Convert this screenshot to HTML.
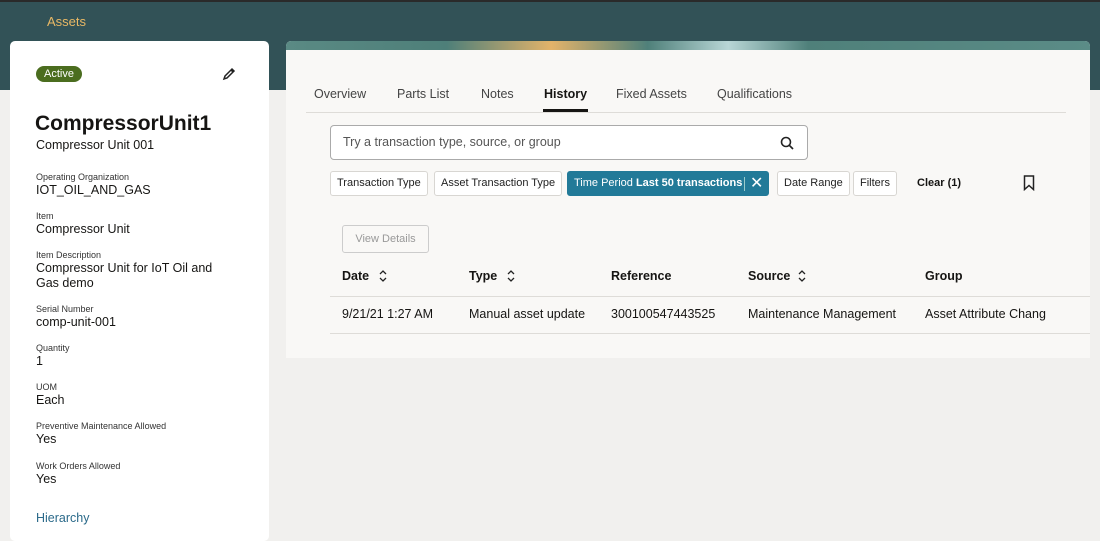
<!DOCTYPE html>
<html><head><style>
*{margin:0;padding:0;box-sizing:border-box}
body{width:1100px;height:538px;overflow:hidden;background:#f1f0ee;font-family:"Liberation Sans",sans-serif;color:#161513;position:relative}
.hdr{position:absolute;left:0;top:0;width:1100px;height:90px;background:#325257;border-top:2px solid #2a2a2a}
.hdr span{position:absolute;left:47px;top:12px;color:#e8b865;font-size:13px}
.left{position:absolute;left:10px;top:41px;width:259px;height:500px;background:#fff;border-radius:5px}
.badge{position:absolute;left:26px;top:25px;background:#4b6d1f;color:#fff;font-size:11px;padding:2px 8px;border-radius:10px}
.lbl{position:absolute;left:26px;font-size:9px;color:#333}
.val{position:absolute;left:26px;font-size:12.5px;line-height:15px}
.right{position:absolute;left:286px;top:41px;width:804px;height:317px;background:#f9f8f6;border-radius:5px 5px 0 0;overflow:hidden}
.band{position:absolute;left:0;top:0;width:804px;height:9px;background:linear-gradient(90deg,#5a8a84,#4e7f79 20%,#e3b36a 33%,#4f807a 45%,#b8d6d6 55%,#4f807a 65%,#5b8c87)}
.tab{position:absolute;top:46px;font-size:12.5px;color:#444}
.chip{position:absolute;top:130px;height:25px;border:1px solid #d8d6d2;background:#fff;border-radius:3px;font-size:11px;line-height:23px;padding:0 6px;color:#222}
.th{position:absolute;top:228px;font-size:12.5px;font-weight:bold}
.td{position:absolute;top:266px;font-size:12.5px}
.sort{position:absolute;top:228px}
</style></head><body>
<div class="hdr"><span>Assets</span></div>
<div class="left">
<div class="badge">Active</div>
<svg style="position:absolute;left:212px;top:26px" width="14" height="14" viewBox="0 0 14 14"><path d="M2 12l1-3 7-7 2 2-7 7z M9 3l2 2" fill="none" stroke="#222" stroke-width="1.5"/></svg>
<div style="position:absolute;left:25px;top:71px;font-size:21px;font-weight:bold">CompressorUnit1</div>
<div class="val" style="top:97px">Compressor Unit 001</div>
<div class="lbl" style="top:131px">Operating Organization</div><div class="val" style="top:142px">IOT_OIL_AND_GAS</div>
<div class="lbl" style="top:170px">Item</div><div class="val" style="top:181px">Compressor Unit</div>
<div class="lbl" style="top:209px">Item Description</div><div class="val" style="top:220px">Compressor Unit for IoT Oil and<br>Gas demo</div>
<div class="lbl" style="top:263px">Serial Number</div><div class="val" style="top:274px">comp-unit-001</div>
<div class="lbl" style="top:302px">Quantity</div><div class="val" style="top:313px">1</div>
<div class="lbl" style="top:341px">UOM</div><div class="val" style="top:352px">Each</div>
<div class="lbl" style="top:380px">Preventive Maintenance Allowed</div><div class="val" style="top:391px">Yes</div>
<div class="lbl" style="top:420px">Work Orders Allowed</div><div class="val" style="top:431px">Yes</div>
<div class="val" style="top:470px;color:#2b6a8a">Hierarchy</div>
</div>
<div class="right">
<div class="band"></div>
<div class="tab" style="left:28px">Overview</div>
<div class="tab" style="left:111px">Parts List</div>
<div class="tab" style="left:195px">Notes</div>
<div class="tab" style="left:258px;color:#161513;font-weight:bold">History</div>
<div style="position:absolute;left:257px;top:68px;width:45px;height:3px;background:#161513"></div>
<div class="tab" style="left:330px">Fixed Assets</div>
<div class="tab" style="left:431px">Qualifications</div>
<div style="position:absolute;left:20px;top:71px;width:760px;height:1px;background:#dedcd8"></div>
<div style="position:absolute;left:44px;top:84px;width:478px;height:35px;border:1px solid #aaa;border-radius:4px;background:#fff;font-size:12.5px;color:#555;padding:9px 12px">Try a transaction type, source, or group</div>
<svg style="position:absolute;left:494px;top:95px" width="14" height="14" viewBox="0 0 14 14"><circle cx="6" cy="6" r="4.5" fill="none" stroke="#222" stroke-width="1.6"/><path d="M9.3 9.3L13 13" stroke="#222" stroke-width="1.7"/></svg>
<div class="chip" style="left:44px">Transaction Type</div>
<div class="chip" style="left:148px">Asset Transaction Type</div>
<div class="chip" style="left:281px;background:#227a98;border-color:#227a98;color:#fff;width:202px">Time Period <b>Last 50 transactions</b><span style="position:absolute;left:176px;top:5px;width:1px;height:14px;background:#9cc"></span><span style="position:absolute;left:182px;font-size:16px">✕</span></div>
<div class="chip" style="left:491px">Date Range</div>
<div class="chip" style="left:567px">Filters</div>
<div style="position:absolute;left:631px;top:136px;font-size:11px;font-weight:bold">Clear (1)</div>
<svg style="position:absolute;left:737px;top:134px" width="12" height="16" viewBox="0 0 12 16"><path d="M1.5 1h9v13.5L6 10.5 1.5 14.5z" fill="none" stroke="#222" stroke-width="1.5"/></svg>
<div style="position:absolute;left:56px;top:184px;width:87px;height:28px;border:1px solid #ccc;border-radius:3px;font-size:11px;color:#999;text-align:center;line-height:26px">View Details</div>
<div class="th" style="left:56px">Date</div>
<div class="th" style="left:183px">Type</div>
<div class="th" style="left:325px">Reference</div>
<div class="th" style="left:462px">Source</div>
<div class="th" style="left:639px">Group</div>
<svg class="sort" style="left:92px" width="10" height="14" viewBox="0 0 10 14"><path d="M2 5l3-3 3 3M2 9l3 3 3-3" fill="none" stroke="#222" stroke-width="1.3"/></svg>
<svg class="sort" style="left:220px" width="10" height="14" viewBox="0 0 10 14"><path d="M2 5l3-3 3 3M2 9l3 3 3-3" fill="none" stroke="#222" stroke-width="1.3"/></svg>
<svg class="sort" style="left:511px" width="10" height="14" viewBox="0 0 10 14"><path d="M2 5l3-3 3 3M2 9l3 3 3-3" fill="none" stroke="#222" stroke-width="1.3"/></svg>
<div style="position:absolute;left:44px;top:255px;width:760px;height:1px;background:#dedcd8"></div>
<div class="td" style="left:56px">9/21/21 1:27 AM</div>
<div class="td" style="left:183px">Manual asset update</div>
<div class="td" style="left:325px">300100547443525</div>
<div class="td" style="left:462px">Maintenance Management</div>
<div class="td" style="left:639px;white-space:nowrap">Asset Attribute Chang</div>
<div style="position:absolute;left:44px;top:292px;width:760px;height:1px;background:#dedcd8"></div>
</div>
</body></html>
